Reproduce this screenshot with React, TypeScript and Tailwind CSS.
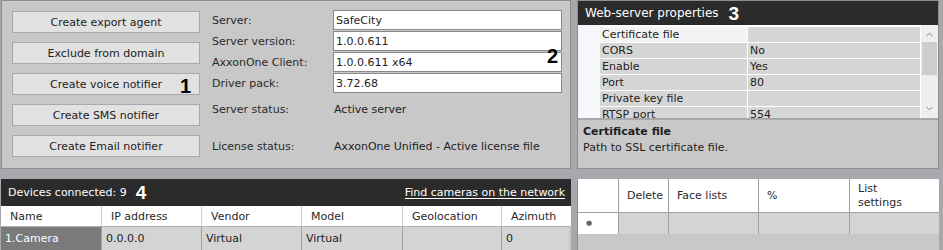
import { ChevronDown, ChevronUp } from 'lucide-react'

const BUTTONS = [
  'Create export agent',
  'Exclude from domain',
  'Create voice notifier',
  'Create SMS notifier',
  'Create Email notifier',
]

const FIELDS = [
  { label: 'Server:', value: 'SafeCity' },
  { label: 'Server version:', value: '1.0.0.611' },
  { label: 'AxxonOne Client:', value: '1.0.0.611 x64' },
  { label: 'Driver pack:', value: '3.72.68' },
]

const PROPS = [
  { name: 'Certificate file', value: '' },
  { name: 'CORS', value: 'No' },
  { name: 'Enable', value: 'Yes' },
  { name: 'Port', value: '80' },
  { name: 'Private key file', value: '' },
  { name: 'RTSP port', value: '554' },
]

const DEVICE_COLS = [
  { title: 'Name', w: 'w-[100px]' },
  { title: 'IP address', w: 'w-[100px]' },
  { title: 'Vendor', w: 'w-[100px]' },
  { title: 'Model', w: 'w-[101px]' },
  { title: 'Geolocation', w: 'w-[99px]' },
  { title: 'Azimuth', w: 'w-[68px]' },
]

const DEVICE_ROW = ['1.Camera', '0.0.0.0', 'Virtual', 'Virtual', '', '0']

const FACE_COLS = [
  { title: '', w: 'w-[40px]' },
  { title: 'Delete', w: 'w-[50px]' },
  { title: 'Face lists', w: 'w-[90px]' },
  { title: '%', w: 'w-[91px]' },
  { title: 'List settings', w: 'flex-1' },
]

function Badge({ n, className }: { n: string; className: string }) {
  return (
    <span className={`absolute font-['Liberation_Sans',sans-serif] text-[20px] font-bold leading-none ${className}`}>
      {n}
    </span>
  )
}

function ServerPanel() {
  return (
    <div className="relative flex h-[169px] w-[570px] border border-[#8e8e8e] bg-[#c8c8c8] pl-[10px] pt-[10px]">
      <div className="flex w-[188px] flex-col gap-[9px]">
        {BUTTONS.map((b) => (
          <div
            key={b}
            className="flex h-[22px] items-center justify-center border border-[#a9a9a9] bg-[#e1e1e1] text-[#222]"
          >
            {b}
          </div>
        ))}
      </div>

      <div className="ml-[12px] flex flex-col">
        <div className="-mt-[1px] flex flex-col gap-[1px]">
          {FIELDS.map((f) => (
            <div key={f.label} className="flex h-[20px] items-center">
              <span className="w-[121px] text-[#2a2a2a]">{f.label}</span>
              <div className="flex h-[20px] w-[229px] items-center border border-[#8a8a8a] bg-white pl-[2px] text-[#1e1e1e]">
                {f.value}
              </div>
            </div>
          ))}
        </div>
        <div className="mt-[6px] flex h-[20px] items-center">
          <span className="w-[122px] text-[#2a2a2a]">Server status:</span>
          <span className="text-[#1e1e1e]">Active server</span>
        </div>
        <div className="mt-[17px] flex h-[20px] items-center">
          <span className="w-[122px] text-[#2a2a2a]">License status:</span>
          <span className="text-[#1e1e1e]">AxxonOne Unified - Active license file</span>
        </div>
      </div>

      <Badge n="1" className="left-[178px] top-[75px] text-black" />
      <Badge n="2" className="left-[545px] top-[45px] text-black" />
    </div>
  )
}

function WebServerPanel() {
  return (
    <div className="flex h-[169px] w-[362px] flex-col border border-[#8e8e8e] bg-[#c8c8c8]">
      <div className="flex h-[24px] items-center gap-[10px] bg-[#2b2b2b] pl-[7px] text-[12px] text-white">
        <span>Web-server properties</span>
        <span className="font-['Liberation_Sans',sans-serif] text-[19px] font-bold leading-none">3</span>
      </div>

      <div className="flex h-[93px] overflow-hidden bg-white">
        <div className="w-[22px] bg-[#f5f7fa]" />
        <div className="flex w-[320px] flex-col gap-[1px] pt-[2px]">
          {PROPS.map((p, i) => (
            <div key={p.name} className="flex h-[15px] shrink-0 gap-[1px]">
              <div
                className={`flex w-[147px] items-center pl-[2px] text-[#222] ${i === 0 ? 'bg-[#f4f4f4]' : 'bg-[#d6d6d6]'}`}
              >
                {p.name}
              </div>
              <div className="flex flex-1 items-center bg-[#d6d6d6] pl-[2px] text-[#222]">{p.value}</div>
            </div>
          ))}
        </div>
        <div className="ml-[1px] flex w-[17px] flex-col items-center bg-[#efefef]">
          <ChevronUp size={11} strokeWidth={2} className="mt-[4px] text-[#777]" />
          <div className="mt-[2px] h-[33px] w-[15px] bg-[#cdcdcd]" />
          <div className="flex-1" />
          <ChevronDown size={11} strokeWidth={2} className="mb-[4px] text-[#777]" />
        </div>
      </div>

      <div className="flex flex-1 flex-col border-t-2 border-[#a8a8a8] pl-[5px] pt-[4px] leading-[16px] text-[#1e1e1e]">
        <span className="font-bold">Certificate file</span>
        <span>Path to SSL certificate file.</span>
      </div>
    </div>
  )
}

function DevicesPanel() {
  return (
    <div className="flex h-[71px] w-[570px] flex-col bg-[#c8c8c8]">
      <div className="flex h-[27px] shrink-0 items-center justify-between bg-[#2b2b2b] pl-[7px] pr-[6px] text-white">
        <span className="flex items-center gap-[9px]">
          Devices connected: 9
          <span className="font-['Liberation_Sans',sans-serif] text-[19px] font-bold leading-none">4</span>
        </span>
        <span className="underline underline-offset-2">Find cameras on the network</span>
      </div>
      <div className="flex h-[20px] shrink-0 bg-white">
        {DEVICE_COLS.map((c, i) => (
          <div
            key={c.title}
            className={`flex items-center pl-[9px] text-[#2a2a2a] ${c.w} ${i > 0 ? 'border-l border-[#d0d0d0]' : ''}`}
          >
            {c.title}
          </div>
        ))}
      </div>
      <div className="flex h-[24px] shrink-0 border-t border-[#b0b0b0]">
        {DEVICE_ROW.map((v, i) => (
          <div
            key={i}
            className={`flex items-center pl-[4px] ${DEVICE_COLS[i].w} ${
              i === 0 ? 'bg-[#7a7a7a] text-white' : 'border-l border-[#a0a0a0] bg-[#d4d4d4] text-[#222]'
            }`}
          >
            {v}
          </div>
        ))}
      </div>
    </div>
  )
}

function FaceListPanel() {
  return (
    <div className="flex h-[71px] w-[362px] flex-col border-l border-[#8e8e8e] bg-[#c8c8c8]">
      <div className="flex h-[33px] shrink-0 bg-white">
        {FACE_COLS.map((c, i) => (
          <div
            key={i}
            className={`flex items-center pl-[8px] leading-[14px] text-[#2a2a2a] ${c.w} ${i > 0 ? 'border-l border-[#a0a0a0]' : ''}`}
          >
            {c.title === 'List settings' ? (
              <span>
                List
                <br />
                settings
              </span>
            ) : (
              c.title
            )}
          </div>
        ))}
      </div>
      <div className="flex h-[22px] shrink-0 border-t border-[#a0a0a0]">
        {FACE_COLS.map((c, i) => (
          <div
            key={i}
            className={`flex items-center ${c.w} ${
              i === 0 ? 'bg-white pl-[8px] text-[7px] text-[#666]' : 'border-l border-[#a0a0a0] bg-[#d4d4d4]'
            }`}
          >
            {i === 0 ? '●' : ''}
          </div>
        ))}
      </div>
    </div>
  )
}

export default function App() {
  return (
    <div className="flex h-[250px] w-[943px] flex-col gap-[10px] overflow-hidden bg-[#a9a7ae] pl-[1px] font-['DejaVu_Sans',sans-serif] text-[11px] leading-none">
      <div className="flex gap-[6px]">
        <ServerPanel />
        <WebServerPanel />
      </div>
      <div className="flex gap-[6px]">
        <DevicesPanel />
        <FaceListPanel />
      </div>
    </div>
  )
}
